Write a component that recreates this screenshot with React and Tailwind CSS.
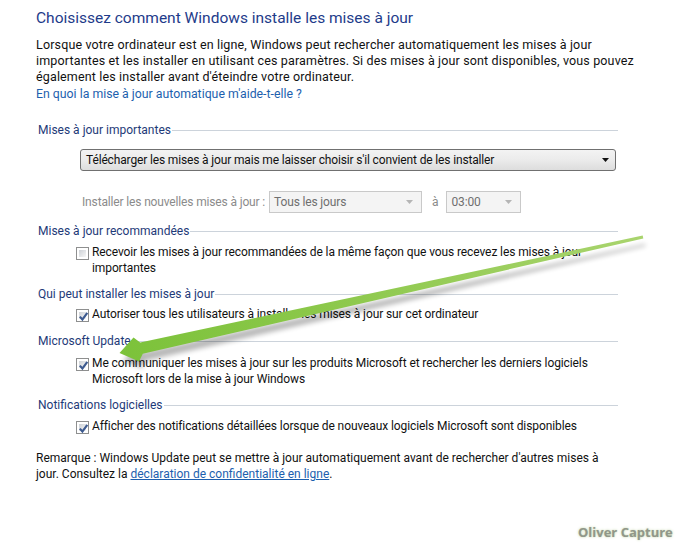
import React from 'react';

const font = { fontFamily: 'Roboto, "Noto Sans", sans-serif' };

function CheckBox({ checked }) {
  return (
    <span className="mt-[3px] inline-flex h-[13px] w-[13px] shrink-0 items-center justify-center border border-[#8e8f8f] bg-white p-[2px]">
      <span className="relative h-full w-full bg-gradient-to-br from-[#cdd1d6] to-[#f7f7f7]">
        {checked && (
          <svg viewBox="0 0 9 9" className="absolute -left-[1px] -top-[1px] h-[11px] w-[11px]">
            <path d="M1.5 4.6 L3.6 7 L7.6 1.6" fill="none" stroke="#3d5a8f" strokeWidth="1.8" />
          </svg>
        )}
      </span>
    </span>
  );
}

function Section({ title, className = '', children }) {
  return (
    <div className={className}>
      <div className="flex items-center pl-[2px] text-[12px] leading-[16px] text-[#1e3a78]">
        <span>{title}</span>
        <span className="ml-[1px] h-px flex-1 bg-[#ccd3db]"></span>
      </div>
      {children}
    </div>
  );
}

function Option({ checked, className = '', children }) {
  return (
    <div className={`ml-[40px] flex gap-[3px] text-[12px] leading-[16px] tracking-[-0.1px] text-[#111] ${className}`}>
      <CheckBox checked={checked} />
      <span>{children}</span>
    </div>
  );
}

function GreyArrow({ className = '' }) {
  return (
    <svg viewBox="0 0 7 4" className={`h-[4px] w-[7px] ${className}`}>
      <path d="M0 0 H7 L3.5 4 Z" fill="currentColor" />
    </svg>
  );
}

export default function App() {
  return (
    <div className="relative h-[552px] w-[695px] overflow-hidden bg-white" style={font}>
      <div className="w-[618px] pl-[36px] pt-[8px]">
        <h1 className="text-[15.5px] leading-[20px] font-normal text-[#1e3b8a]">
          Choisissez comment Windows installe les mises à jour
        </h1>
        <p className="mt-[9px] w-[600px] text-[12.5px] leading-[16px] tracking-[0.15px] text-[#111]">
          Lorsque votre ordinateur est en ligne, Windows peut rechercher automatiquement les mises à jour importantes et les installer en utilisant ces paramètres. Si des mises à jour sont disponibles, vous pouvez également les installer avant d'éteindre votre ordinateur.
        </p>
        <div className="mt-[1px] text-[12.3px] leading-[16px] text-[#1d5fae]">
          En quoi la mise à jour automatique m'aide-t-elle ?
        </div>

        <Section title="Mises à jour importantes" className="mt-[20px]">
          <div className="ml-[44px] mt-[11px] flex h-[22px] w-[536px] items-center justify-between rounded-[3px] border border-[#707070] bg-gradient-to-b from-[#f3f3f3] via-[#ebebeb] to-[#dddddd] pl-[5px] pr-[6px] text-[12px] tracking-[-0.15px] text-[#111]">
            <span>Télécharger les mises à jour mais me laisser choisir s'il convient de les installer</span>
            <GreyArrow className="text-[#111]" />
          </div>
          <div className="ml-[46px] mt-[20px] flex items-center text-[12px] tracking-[-0.15px] text-[#8b8b8b]">
            <span>Installer les nouvelles mises à jour :</span>
            <div className="ml-[4px] flex h-[22px] w-[153px] items-center justify-between border border-[#c9c9c9] bg-[#f4f4f4] pl-[4px] pr-[8px] text-[#6f6f6f]">
              <span>Tous les jours</span>
              <GreyArrow className="text-[#b5b5b5]" />
            </div>
            <span className="ml-[10px]">à</span>
            <div className="ml-[8px] flex h-[22px] w-[75px] items-center justify-between border border-[#c9c9c9] bg-[#f4f4f4] pl-[4px] pr-[8px] text-[#6f6f6f]">
              <span>03:00</span>
              <GreyArrow className="text-[#b5b5b5]" />
            </div>
          </div>
        </Section>

        <Section title="Mises à jour recommandées" className="mt-[10px]">
          <Option className="mt-[5px]">
            Recevoir les mises à jour recommandées de la même façon que vous recevez les mises à jour importantes
          </Option>
        </Section>

        <Section title="Qui peut installer les mises à jour" className="mt-[10px]">
          <Option checked className="mt-[4px]">
            Autoriser tous les utilisateurs à installer les mises à jour sur cet ordinateur
          </Option>
        </Section>

        <Section title="Microsoft Update" className="mt-[11px]">
          <Option checked className="mt-[6px]">
            Me communiquer les mises à jour sur les produits Microsoft et rechercher les derniers logiciels Microsoft lors de la mise à jour Windows
          </Option>
        </Section>

        <Section title="Notifications logicielles" className="mt-[10px]">
          <Option checked className="mt-[5px]">
            Afficher des notifications détaillées lorsque de nouveaux logiciels Microsoft sont disponibles
          </Option>
        </Section>

        <div className="mt-[16px] text-[12px] leading-[16px] text-[#111]">
          <div>Remarque : Windows Update peut se mettre à jour automatiquement avant de rechercher d'autres mises à</div>
          <div>
            <span>jour. Consultez la </span>
            <span className="text-[#1d5fae] underline">déclaration de confidentialité en ligne</span>
            <span>.</span>
          </div>
        </div>
      </div>

      {/* annotation arrow drawn over the capture */}
      <svg className="pointer-events-none absolute left-0 top-0" width="695" height="552" viewBox="0 0 695 552">
        <defs>
          <linearGradient id="arrowFill" x1="643" y1="237" x2="120" y2="353" gradientUnits="userSpaceOnUse">
            <stop offset="0" stopColor="#a9d46e" />
            <stop offset="0.6" stopColor="#8cc84b" />
            <stop offset="1" stopColor="#7cc23a" />
          </linearGradient>
          <filter id="arrowShadow" x="-10%" y="-20%" width="120%" height="140%">
            <feGaussianBlur stdDeviation="2.5" />
          </filter>
        </defs>
        <polygon
          points="643,240 141,348 135,342 121,357 140,364 143,357 644,242"
          fill="#000"
          opacity="0.28"
          filter="url(#arrowShadow)"
          transform="translate(2,4)"
        />
        <polygon
          points="642.7,235.6 140.2,342.5 133.5,337.5 119.5,353 139,361.5 142.8,353.8 643.3,238.4"
          fill="url(#arrowFill)"
        />
      </svg>

      <span
        className="absolute left-[578px] top-[524px] text-[13px] font-bold leading-[16px] text-[#91978a]"
        style={{ fontFamily: '"Open Sans", sans-serif', textShadow: '0 0 3px #c9d8b3, 0 0 1px #d4dfc4' }}
      >
        Oliver Capture
      </span>
    </div>
  );
}
